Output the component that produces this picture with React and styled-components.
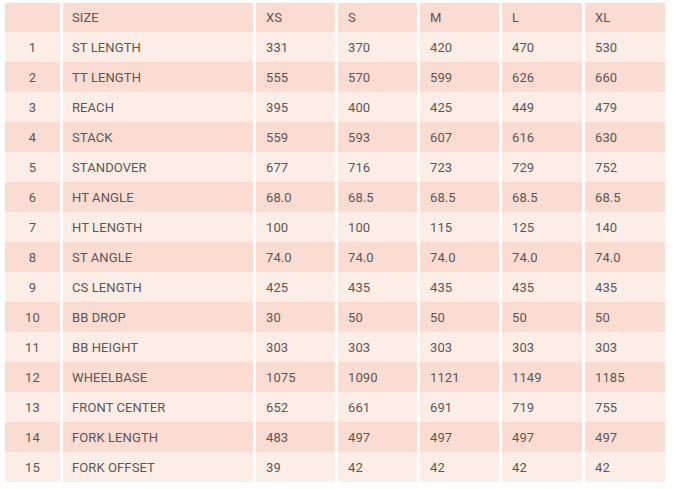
import React from 'react';
import styled, { createGlobalStyle } from 'styled-components';

const GlobalStyle = createGlobalStyle`
	html, body {
		margin: 0;
		padding: 0;
		background: #fff;
	}
`;

const sizes = ['XS', 'S', 'M', 'L', 'XL'];

const rows = [
	['ST LENGTH', '331', '370', '420', '470', '530'],
	['TT LENGTH', '555', '570', '599', '626', '660'],
	['REACH', '395', '400', '425', '449', '479'],
	['STACK', '559', '593', '607', '616', '630'],
	['STANDOVER', '677', '716', '723', '729', '752'],
	['HT ANGLE', '68.0', '68.5', '68.5', '68.5', '68.5'],
	['HT LENGTH', '100', '100', '115', '125', '140'],
	['ST ANGLE', '74.0', '74.0', '74.0', '74.0', '74.0'],
	['CS LENGTH', '425', '435', '435', '435', '435'],
	['BB DROP', '30', '50', '50', '50', '50'],
	['BB HEIGHT', '303', '303', '303', '303', '303'],
	['WHEELBASE', '1075', '1090', '1121', '1149', '1185'],
	['FRONT CENTER', '652', '661', '691', '719', '755'],
	['FORK LENGTH', '483', '497', '497', '497', '497'],
	['FORK OFFSET', '39', '42', '42', '42', '42'],
];

const colWidths = [55, 190, 79, 79, 79, 80, 80];

const App = () => {
	return (
		<>
			<GlobalStyle />
			<Wrapper>
				<Table>
					<colgroup>
						{colWidths.map((w, i) => (
							<col key={i} style={{ width: w }} />
						))}
					</colgroup>
					<thead>
						<Row $dark $head>
							<Cell $center />
							<Cell $label>SIZE</Cell>
							{sizes.map(s => (
								<Cell key={s}>{s}</Cell>
							))}
						</Row>
					</thead>
					<tbody>
						{rows.map(([label, ...values], i) => (
							<Row key={label} $dark={i % 2 === 1}>
								<Cell $center>{i + 1}</Cell>
								<Cell $label>{label}</Cell>
								{values.map((v, j) => (
									<Cell key={j}>{v}</Cell>
								))}
							</Row>
						))}
					</tbody>
				</Table>
			</Wrapper>
		</>
	);
};

export default App;

const Wrapper = styled.div`
	padding: 3px 0 0 2px;
`;

const Table = styled.table`
	border-collapse: separate;
	border-spacing: 3px 0;
	table-layout: fixed;
	width: 666px;
	margin: 0;
	font-family: Roboto, 'Liberation Sans', sans-serif;
	font-size: 13px;
	color: #5e5655;
`;

const Row = styled.tr`
	height: ${({ $head }) => ($head ? '29px' : '30px')};

	& > td {
		background: ${({ $dark }) => ($dark ? '#fbdcd2' : '#fdede7')};
	}
`;

const Cell = styled.td`
	padding: 0 0 0 ${({ $center, $label }) => ($center ? '0' : $label ? '9px' : '10px')};
	text-align: ${({ $center }) => ($center ? 'center' : 'left')};
	vertical-align: middle;
	white-space: nowrap;
	letter-spacing: 0.1px;
`;
